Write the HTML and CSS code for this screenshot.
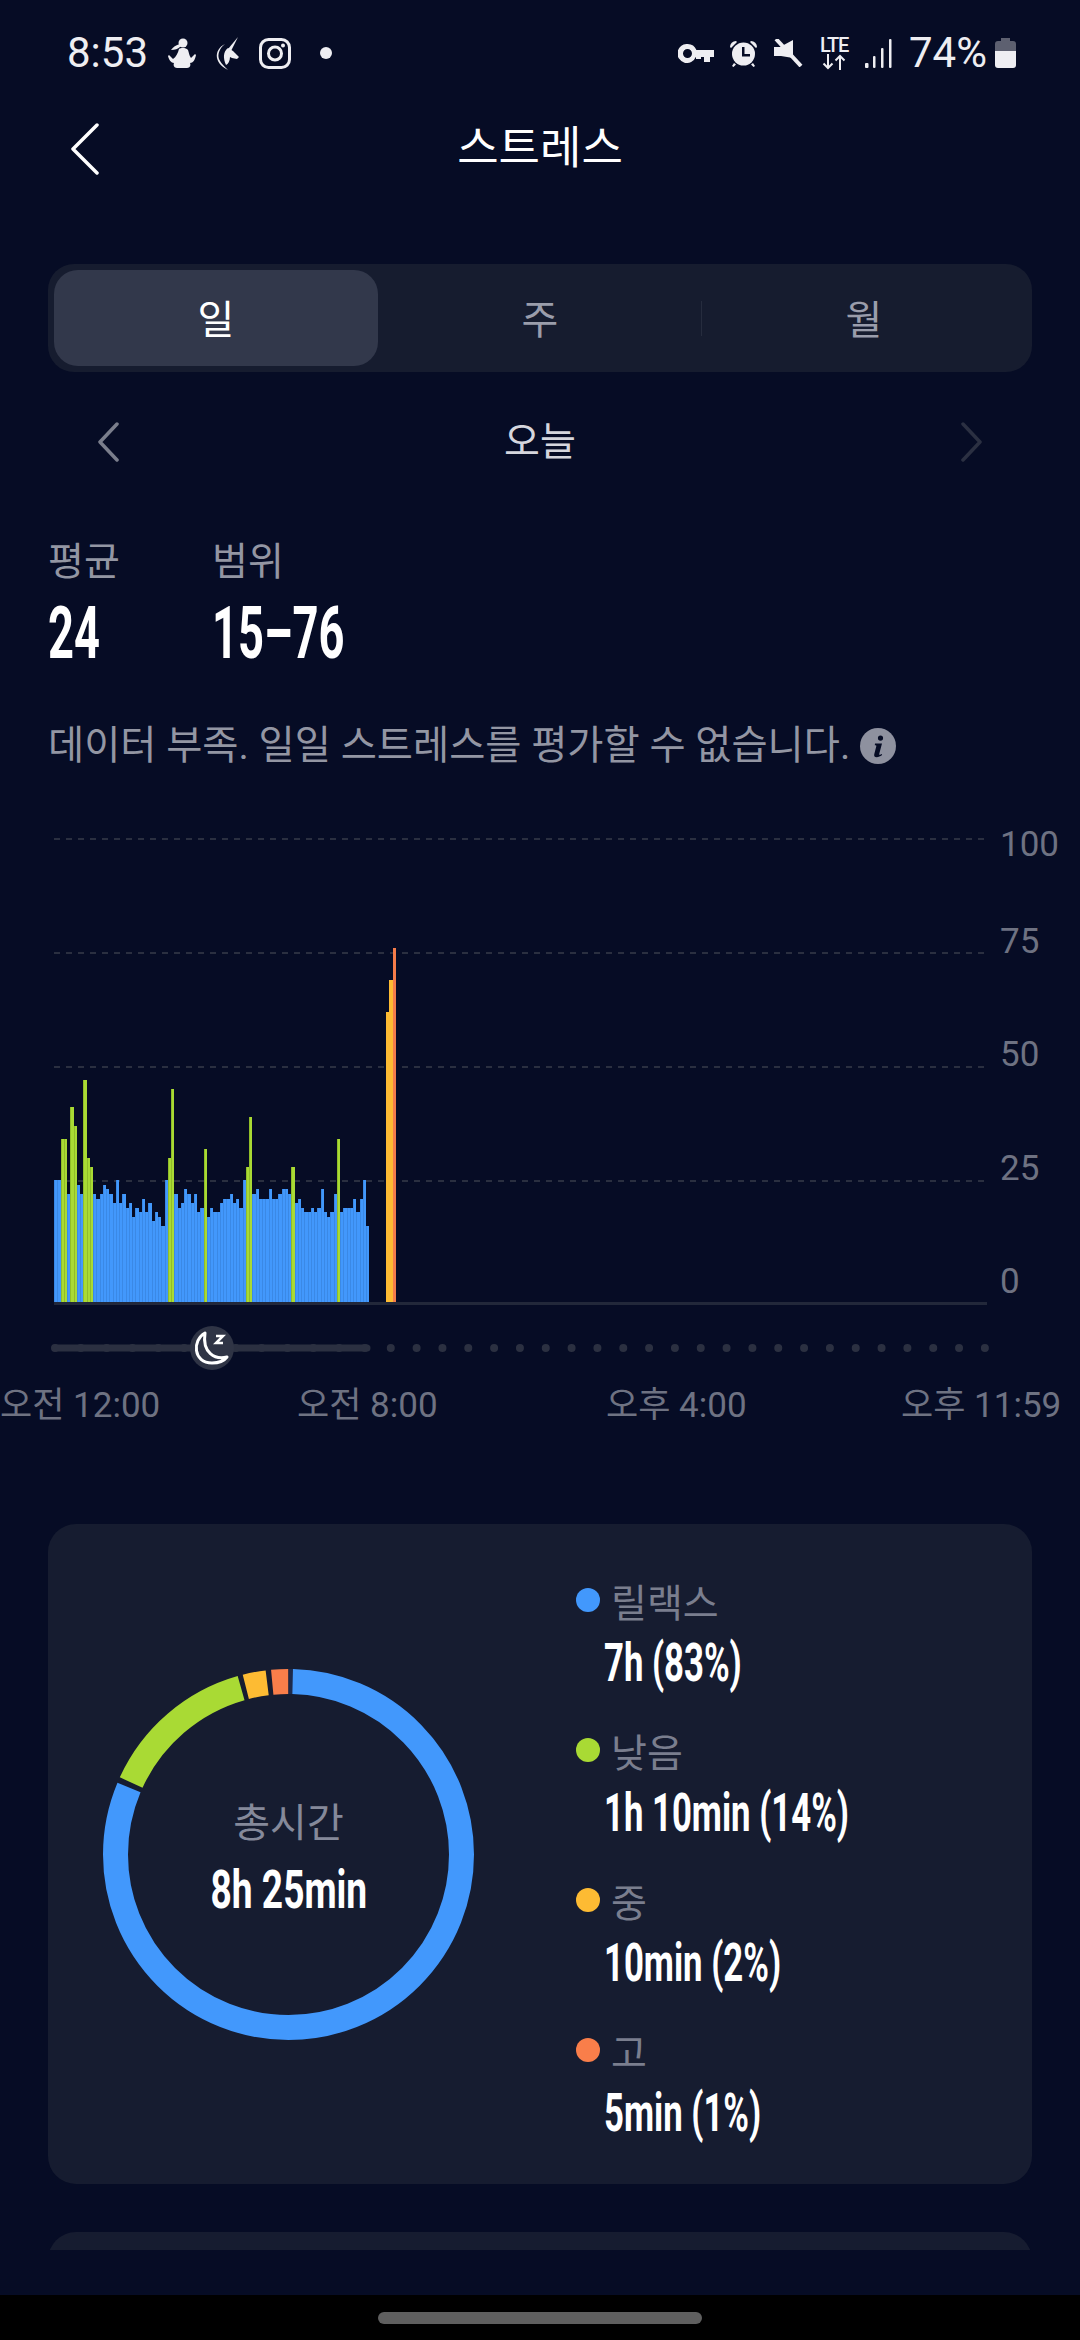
FILE: index.html
```html
<!DOCTYPE html>
<html lang="ko">
<head>
<meta charset="utf-8">
<title>스트레스</title>
<link rel="stylesheet" href="styles.css">
</head>
<body>
<div class="screen">
  <main class="scroll">
    <header class="status">
      <div class="status-left">
        <span class="clock">8:53</span>
        <svg class="ic" width="28" height="30" viewBox="0 0 28 30"><circle cx="15" cy="5" r="4.500"/><path d="M12 6C8 7 5 9 3 12c4 0 7-1 9-3z"/><path d="M11 11c2-1.500 7-1.500 9 1 1 3 1 5 3 8l4-4 1 1c-1 5-3 8-6 8 1 2 0 5-3 5H9c-3 0-4-3-3-5-3 0-5-3-6-7l1-1 4 4c3-2 5-6 6-10z"/></svg>
        <svg class="ic" width="23" height="33" viewBox="0 0 23 33"><path d="M22 0 12 12l3 2z"/><path d="M12 11l5 3 6 6-2 2-5-1-2-1c0 4-2 7-4 8-3-7-3-13 2-17z"/><path d="M9 7C3 10 0 15 1 21c1 5 5 9 11 12C7 28 3 24 2.500 20 2 15 5 10 9 7z"/></svg>
        <svg class="ic-line" width="32" height="31" viewBox="0 0 32 31"><rect x="1.500" y="1.500" width="29" height="28" rx="8"/><circle cx="16" cy="15.500" r="6.500"/><circle class="ic-fill" cx="24" cy="7.500" r="2"/></svg>
        <span class="status-dot"></span>
      </div>
      <div class="status-right">
        <svg class="ic" width="36" height="19" viewBox="0 0 36 19"><path fill-rule="evenodd" d="M9.500 0a9.500 9.500 0 0 1 8.900 6H36v7h-4v5h-6v-5h-3v2h-5v-2h-.200A9.500 9.500 0 1 1 9.500 0zm0 5a4.500 4.500 0 1 0 0 9 4.500 4.500 0 0 0 0-9z"/></svg>
        <svg class="ic" width="29" height="28" viewBox="0 0 29 28"><path d="M1 8a6 6 0 0 1 6-6l1 1-6 6zM28 8a6 6 0 0 0-6-6l-1 1 6 6z"/><circle cx="14.500" cy="15" r="11.500"/><path d="M5 24l-2 3 1.500 1L7 25.500zM24 24l2 3-1.500 1L22 25.500z"/><path class="ic-cut" d="M13 8h2.500v7H21v2.500h-8z"/></svg>
        <svg class="ic" width="30" height="28" viewBox="0 0 30 28"><path d="M20 1v18L8 17H1V8h6z"/><path class="ic-slash" d="M3 0l25 27"/></svg>
        <div class="lte"><span class="lte-text">LTE</span><svg class="lte-arrows" width="24" height="16" viewBox="0 0 24 16"><path d="M6 0v14M1.500 9.500 6 14l4.500-4.500M18 16V2M13.500 6.500 18 2l4.500 4.500"/></svg></div>
        <svg class="ic" width="27" height="29" viewBox="0 0 27 29"><rect x="0" y="24" width="3.500" height="5" rx="1"/><rect x="8" y="17" width="2.500" height="12" rx="1"/><rect x="16" y="9" width="2.500" height="20" rx="1"/><rect x="24" y="0" width="2.500" height="29" rx="1"/></svg>
        <span class="pct">74%</span>
        <svg class="battery" width="21" height="30" viewBox="0 0 21 30"><path class="batt-top" d="M6 0h9v3h3a3 3 0 0 1 3 3v7H0V6a3 3 0 0 1 3-3h3z"/><path class="batt-body" d="M0 13h21v14a3 3 0 0 1-3 3H3a3 3 0 0 1-3-3z"/></svg>
      </div>
    </header>

    <div class="titlebar">
      <svg class="chev back" width="28" height="52" viewBox="0 0 28 52"><path d="M26 2 2 26l24 24"/></svg>
      <h1 class="title">스트레스</h1>
      <span></span>
    </div>

    <nav class="tabs">
      <span class="tab active">일</span>
      <span class="tab">주</span>
      <span class="tab-div"></span>
      <span class="tab">월</span>
    </nav>

    <div class="daterow">
      <svg class="chev prev" width="22" height="40" viewBox="0 0 22 40"><path d="M20 2 3 20l17 18"/></svg>
      <span class="date">오늘</span>
      <svg class="chev next" width="22" height="40" viewBox="0 0 22 40"><path d="M2 2l17 18L2 38"/></svg>
    </div>

    <section class="stats">
      <div class="stat stat-avg"><div class="stat-label">평균</div><div class="stat-val"><span class="cond-big">24</span></div></div>
      <div class="stat"><div class="stat-label">범위</div><div class="stat-val"><span class="cond-big">15–76</span></div></div>
    </section>

    <p class="notice">데이터 부족. 일일 스트레스를 평가할 수 없습니다.<svg class="info" width="36" height="36" viewBox="0 0 36 36"><circle class="info-bg" cx="18" cy="18" r="18"/><path class="info-i" d="M20.500 7.500a2.600 2.600 0 1 1 0 5.200 2.600 2.600 0 0 1 0-5.200zM15 15.500h7l-2.800 10.500c-.2.800.3 1 1 .7l1.600-.8.300 1.200c-2 1.500-3.600 2.100-5.400 2.100-2 0-3-1.300-2.400-3.300l2-7.600c.2-.8-.2-1.100-1.500-1.100z"/></svg></p>

    <section class="chart">
      <div class="plot">
        <div class="gridline"></div>
        <div class="gridline"></div>
        <div class="gridline"></div>
        <div class="gridline"></div>
        <div class="bars">
          <i class="bar b" style="height:122px"></i><i class="bar b" style="height:122px"></i><i class="bar g" style="height:163px"></i><i class="bar g" style="height:163px"></i><i class="bar b" style="height:108px"></i><i class="bar g" style="height:195px"></i><i class="bar g" style="height:176px"></i><i class="bar b" style="height:117px"></i><i class="bar b" style="height:108px"></i><i class="bar g" style="height:222px"></i>
          <i class="bar g" style="height:144px"></i><i class="bar g" style="height:135px"></i><i class="bar b" style="height:108px"></i><i class="bar b" style="height:103px"></i><i class="bar b" style="height:108px"></i><i class="bar b" style="height:117px"></i><i class="bar b" style="height:113px"></i><i class="bar b" style="height:108px"></i><i class="bar b" style="height:99px"></i><i class="bar b" style="height:122px"></i>
          <i class="bar b" style="height:99px"></i><i class="bar b" style="height:108px"></i><i class="bar b" style="height:94px"></i><i class="bar b" style="height:99px"></i><i class="bar b" style="height:85px"></i><i class="bar b" style="height:94px"></i><i class="bar b" style="height:90px"></i><i class="bar b" style="height:103px"></i><i class="bar b" style="height:90px"></i><i class="bar b" style="height:99px"></i>
          <i class="bar b" style="height:81px"></i><i class="bar b" style="height:90px"></i><i class="bar b" style="height:85px"></i><i class="bar b" style="height:76px"></i><i class="bar b" style="height:122px"></i><i class="bar g" style="height:144px"></i><i class="bar g" style="height:213px"></i><i class="bar b" style="height:108px"></i><i class="bar b" style="height:94px"></i><i class="bar b" style="height:99px"></i>
          <i class="bar b" style="height:113px"></i><i class="bar b" style="height:108px"></i><i class="bar b" style="height:99px"></i><i class="bar b" style="height:108px"></i><i class="bar b" style="height:90px"></i><i class="bar b" style="height:94px"></i><i class="bar g" style="height:153px"></i><i class="bar b" style="height:85px"></i><i class="bar b" style="height:94px"></i><i class="bar b" style="height:90px"></i>
          <i class="bar b" style="height:90px"></i><i class="bar b" style="height:99px"></i><i class="bar b" style="height:103px"></i><i class="bar b" style="height:103px"></i><i class="bar b" style="height:108px"></i><i class="bar b" style="height:99px"></i><i class="bar b" style="height:103px"></i><i class="bar b" style="height:94px"></i><i class="bar b" style="height:122px"></i><i class="bar g" style="height:135px"></i>
          <i class="bar g" style="height:185px"></i><i class="bar b" style="height:108px"></i><i class="bar b" style="height:113px"></i><i class="bar b" style="height:103px"></i><i class="bar b" style="height:103px"></i><i class="bar b" style="height:103px"></i><i class="bar b" style="height:113px"></i><i class="bar b" style="height:103px"></i><i class="bar b" style="height:103px"></i><i class="bar b" style="height:108px"></i>
          <i class="bar b" style="height:113px"></i><i class="bar b" style="height:113px"></i><i class="bar b" style="height:108px"></i><i class="bar g" style="height:135px"></i><i class="bar b" style="height:99px"></i><i class="bar b" style="height:103px"></i><i class="bar b" style="height:94px"></i><i class="bar b" style="height:90px"></i><i class="bar b" style="height:90px"></i><i class="bar b" style="height:94px"></i>
          <i class="bar b" style="height:90px"></i><i class="bar b" style="height:94px"></i><i class="bar b" style="height:113px"></i><i class="bar b" style="height:90px"></i><i class="bar b" style="height:85px"></i><i class="bar b" style="height:90px"></i><i class="bar b" style="height:108px"></i><i class="bar g" style="height:163px"></i><i class="bar b" style="height:90px"></i><i class="bar b" style="height:94px"></i>
          <i class="bar b" style="height:94px"></i><i class="bar b" style="height:94px"></i><i class="bar b" style="height:103px"></i><i class="bar b" style="height:90px"></i><i class="bar b" style="height:103px"></i><i class="bar b" style="height:122px"></i><i class="bar b" style="height:76px"></i>
          <i class="bar y wide bar-gap" style="height:290px"></i><i class="bar y wide" style="height:322px"></i><i class="bar o wide" style="height:354px"></i>
        </div>
      </div>
      <div class="axis">
        <span class="axis-top">100</span>
        <span>75</span>
        <span>50</span>
        <span>25</span>
        <span>0</span>
      </div>
    </section>

    <svg class="timeline" width="1080" height="50" viewBox="0 0 1080 50">
      <path class="tl-dots" d="M55 25H990"/>
      <path class="tl-track" d="M56 25H367"/>
      <circle class="tl-knob" cx="212" cy="25" r="22"/>
      <path class="tl-moon" d="M205 10c-13 7-12 30 7 30 7 0 12-2 15-6-12 3-25-4-22-24z"/>
      <path class="tl-z" d="M216 13h7l-7 7h7"/>
    </svg>

    <div class="times">
      <span>오전 12:00</span>
      <span>오전 8:00</span>
      <span>오후 4:00</span>
      <span>오후 11:59</span>
    </div>

    <section class="card summary">
      <div class="donut">
        <svg width="371" height="371" viewBox="0 0 371 371">
          <g transform="rotate(-90 185.500 185.500)" fill="none" stroke-width="25">
            <circle class="seg-gap" cx="185.500" cy="185.500" r="173" pathLength="360" stroke-dasharray="2 360" stroke-dashoffset="0"/>
            <circle class="seg-blue" cx="185.500" cy="185.500" r="173" pathLength="360" stroke-dasharray="291.400 360" stroke-dashoffset="-1.400"/>
            <circle class="seg-green" cx="185.500" cy="185.500" r="173" pathLength="360" stroke-dasharray="49.500 360" stroke-dashoffset="-294.600"/>
            <circle class="seg-yellow" cx="185.500" cy="185.500" r="173" pathLength="360" stroke-dasharray="7.200 360" stroke-dashoffset="-345.700"/>
            <circle class="seg-orange" cx="185.500" cy="185.500" r="173" pathLength="360" stroke-dasharray="5.300 360" stroke-dashoffset="-354.600"/>
          </g>
        </svg>
        <div class="donut-center">
          <span class="donut-label">총시간</span>
          <span class="donut-val">8h 25min</span>
        </div>
      </div>
      <ul class="legend">
        <li class="legend-item"><div class="legend-head"><span class="dot dot-blue"></span>릴랙스</div><div class="legend-val"><span class="cond">7h (83%)</span></div></li>
        <li class="legend-item"><div class="legend-head"><span class="dot dot-green"></span>낮음</div><div class="legend-val"><span class="cond">1h 10min (14%)</span></div></li>
        <li class="legend-item"><div class="legend-head"><span class="dot dot-yellow"></span>중</div><div class="legend-val"><span class="cond">10min (2%)</span></div></li>
        <li class="legend-item"><div class="legend-head"><span class="dot dot-orange"></span>고</div><div class="legend-val"><span class="cond">5min (1%)</span></div></li>
      </ul>
    </section>

    <section class="card next-card"></section>
  </main>
  <div class="under"></div>
  <footer class="navbar"><span class="pill"></span></footer>
</div>
</body>
</html>
```

FILE: styles.css
```css
* { box-sizing: border-box; }
html, body { margin: 0; padding: 0; }
body {
  width: 1080px;
  height: 2340px;
  background: #060c25;
  color: #fff;
  font-family: Roboto, "Noto Sans CJK KR", sans-serif;
  overflow: hidden;
}
.screen { width: 1080px; height: 2340px; display: flex; flex-direction: column; }
.scroll { height: 2250px; overflow: hidden; flex: none; }
.under { height: 45px; flex: none; }
.navbar { height: 45px; flex: none; background: #000; display: flex; justify-content: center; padding-top: 17px; }
.pill { width: 324px; height: 12px; border-radius: 6px; background: #5f5f5f; }

/* status bar */
.status { height: 106px; display: flex; justify-content: space-between; align-items: center; padding: 0 64px 0 67px; color: #eeeef2; }
.status-left, .status-right { display: flex; align-items: center; }
.status-left { gap: 20px; }
.status-right { gap: 15px; }
.clock { font-size: 42px; line-height: 46px; }
.pct { font-size: 42px; line-height: 46px; margin-left: 2px; }
.ic { fill: #eeeef2; display: block; flex: none; }
.ic-line { fill: none; stroke: #eeeef2; stroke-width: 3; display: block; flex: none; }
.ic-fill { fill: #eeeef2; stroke: none; }
.ic-cut { fill: #060c25; }
.ic-slash { fill: none; stroke: #eeeef2; stroke-width: 4; }
.status-dot { width: 12px; height: 12px; border-radius: 50%; background: #eeeef2; margin-left: 9px; }
.lte { width: 32px; display: flex; flex-direction: column; align-items: center; }
.lte-text { font-size: 20px; line-height: 16px; font-weight: 500; letter-spacing: -1.2px; }
.lte-arrows { fill: none; stroke: #eeeef2; stroke-width: 2; display: block; margin-top: 1px; }
.battery { display: block; flex: none; margin-left: -7px; }
.batt-top { fill: #5d6070; }
.batt-body { fill: #eeeef2; }

/* title */
.titlebar { height: 86px; display: grid; grid-template-columns: 1fr auto 1fr; align-items: center; padding: 0 71px; }
.title { margin: 0; font-size: 45px; line-height: 56px; font-weight: 400; }
.chev { display: block; fill: none; stroke-linecap: round; stroke-linejoin: round; }
.back { stroke: #fff; stroke-width: 3.500; }
.prev { stroke: #7a7e8c; stroke-width: 3.500; }
.next { stroke: #2b3042; stroke-width: 3.500; }

/* tabs */
.tabs { margin: 72px 48px 0 48px; height: 108px; padding: 6px; background: #161c2f; border-radius: 26px; display: grid; grid-template-columns: 324px 324px 1fr; position: relative; }
.tab { display: flex; align-items: center; justify-content: center; font-size: 40px; color: #9a9dab; padding-bottom: 2px; }
.tab.active { background: #32384b; color: #fff; border-radius: 24px; }
.tab-div { position: absolute; left: 653px; top: 37px; width: 1px; height: 35px; background: #262c3e; }

/* date */
.daterow { margin-top: 30px; height: 80px; padding: 0 97px; display: flex; justify-content: space-between; align-items: center; }
.date { font-size: 39px; line-height: 44px; color: #d5d6dd; margin-top: -1px; }

/* stats */
.stats { margin: 58px 0 0 48px; display: flex; }
.stat-avg { width: 164px; }
.stat-label { font-size: 39px; line-height: 44px; color: #9396a3; }
.stat-val { margin-top: 13px; height: 72px; line-height: 72px; font-size: 73px; font-weight: 700; }
.cond-big { display: inline-block; transform: scaleX(.62); transform-origin: 0 50%; white-space: nowrap; }

/* notice */
.notice { margin: 55px 0 0 48px; height: 44px; line-height: 44px; font-size: 39.300px; color: #9396a3; display: flex; align-items: center; white-space: nowrap; }
.info { margin-left: 10px; flex: none; }
.info-bg { fill: #8e919f; }
.info-i { fill: #060c25; }

/* chart */
.chart { margin-top: 70px; padding-left: 54px; display: flex; gap: 13px; align-items: flex-start; }
.plot { position: relative; width: 933px; height: 467px; border-bottom: 3px solid #22283a; display: flex; flex-direction: column; gap: 112px; flex: none; }
.gridline { width: 930px; height: 2px; flex: none; background: repeating-linear-gradient(90deg, #2a2f40 0 6px, transparent 6px 12px); }
.bars { position: absolute; left: 0; bottom: 0; height: 360px; display: flex; align-items: flex-end; }
.bar { display: block; flex: 0 0 3.260px; }
.bar.wide { flex-basis: 3.500px; }
.b { background: #4298fc; box-shadow: inset 1px 0 0 rgba(44, 110, 190, .35); }
.g { background: #a9da34; box-shadow: inset 1px 0 0 rgba(120, 160, 30, .5); }
.y { background: #fdbb33; }
.o { background: #f47c4a; }
.bar-gap { margin-left: 16.300px; }
.axis { margin-top: -13px; display: flex; flex-direction: column; gap: 73.500px; font-size: 35px; line-height: 40px; color: #6e7282; }
.axis-top { margin-bottom: -17px; }

/* timeline */
.timeline { display: block; margin-top: 18px; }
.tl-dots { fill: none; stroke: #2b3041; stroke-width: 8; stroke-linecap: round; stroke-dasharray: 0 25.830; }
.tl-track { fill: none; stroke: #2b3041; stroke-width: 7; stroke-linecap: round; }
.tl-knob { fill: #2f3445; }
.tl-moon { fill: none; stroke: #fff; stroke-width: 3; stroke-linejoin: round; }
.tl-z { fill: none; stroke: #fff; stroke-width: 2.500; }
.times { margin-top: 11px; display: grid; grid-template-columns: 297px 309px 295px 179px; font-size: 35px; line-height: 44px; color: #6e7282; white-space: nowrap; }

/* cards */
.card { margin: 0 48px; background: #161c30; border-radius: 28px; }
.summary { margin-top: 96px; height: 660px; padding-left: 55px; display: flex; align-items: center; }
.donut { position: relative; width: 371px; height: 371px; flex: none; }
.donut svg { display: block; }
.seg-gap { stroke: #1d2a4c; }
.seg-blue { stroke: #4298fc; }
.seg-green { stroke: #a9da34; }
.seg-yellow { stroke: #fdbb33; }
.seg-orange { stroke: #f97e4a; }
.donut-center { position: absolute; inset: 0; display: flex; flex-direction: column; align-items: center; }
.donut-label { margin-top: 133px; font-size: 40px; line-height: 44px; color: #85899a; }
.donut-val { margin-top: 11px; font-size: 53px; line-height: 66px; font-weight: 700; white-space: nowrap; transform: scaleX(.7); }
.legend { list-style: none; margin: 54px 0 0 102px; padding: 0; align-self: flex-start; display: flex; flex-direction: column; gap: 32px; }
.legend-head { display: flex; align-items: center; gap: 11px; height: 44px; font-size: 39px; color: #7a7e8e; }
.legend-val { margin-top: 8px; padding-left: 28px; height: 66px; line-height: 66px; font-size: 53px; font-weight: 700; white-space: nowrap; }
.cond { display: inline-block; transform: scaleX(.655); transform-origin: 0 50%; }
.dot { width: 24px; height: 24px; border-radius: 50%; flex: none; }
.dot-blue { background: #4298fc; }
.dot-green { background: #a9da34; }
.dot-yellow { background: #fdbb33; }
.dot-orange { background: #f97e4a; }
.next-card { margin-top: 48px; height: 100px; }
```
